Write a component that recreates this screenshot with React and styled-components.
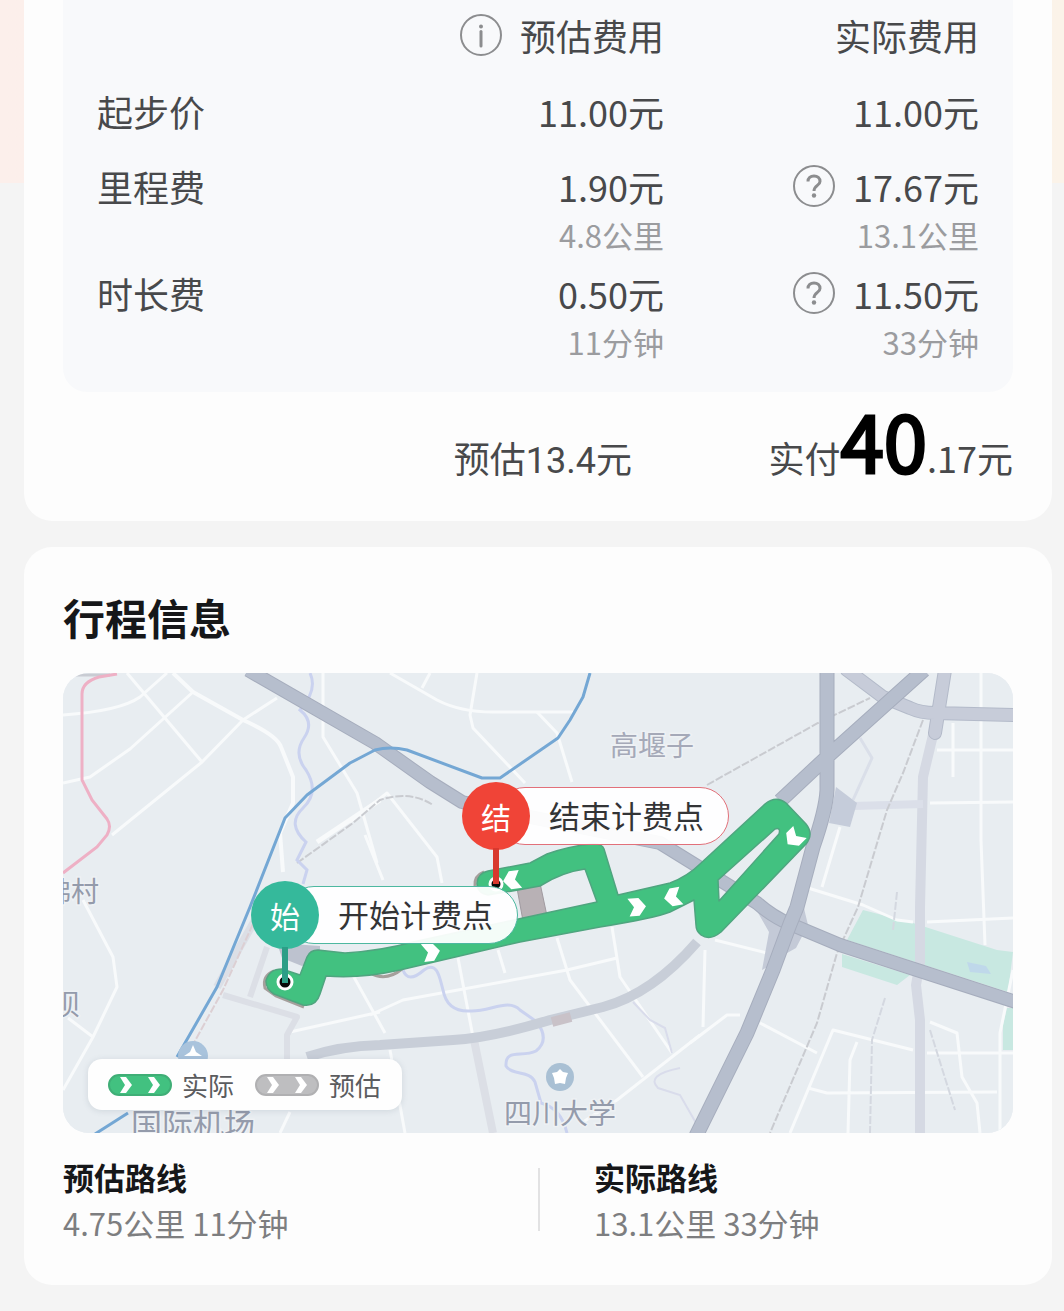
import React from "react";
import styled, { createGlobalStyle } from "styled-components";

const GlobalStyle = createGlobalStyle`
  *, *::before, *::after { box-sizing: border-box; }
  body {
    margin: 0;
    background: #f4f4f4;
    font-family: "Noto Sans CJK SC", "Noto Sans", sans-serif;
    color: #48494b;
  }
`;

const Page = styled.main`
  display: flex;
  flex-direction: column;
  gap: 26px;
  padding: 0 12px 26px 24px;
  background: linear-gradient(90deg, #fcefeb, #fbf3e9) no-repeat 0 0 / 100% 183px, #f4f4f4;
`;

const Card = styled.section`
  background: #fdfdfd;
  border-radius: ${(p) => (p.$continued ? "0 0 28px 28px" : "28px")};
  padding: ${(p) => (p.$continued ? "0 39px 32px" : "40px 39px 39px")};
`;

const FeePanel = styled.div`
  background: #f8f9fb;
  border-radius: 0 0 24px 24px;
  padding: 10px 34px 17px;
`;

const FeeTable = styled.table`
  width: 100%;
  border-collapse: collapse;
  table-layout: fixed;
`;

const Cell = styled.td`
  padding: 0 0 ${(p) => p.$gap}px;
  vertical-align: top;
  text-align: ${(p) => (p.$start ? "left" : "right")};
  font-weight: 400;
  font-size: 36px;
  line-height: 50px;
  white-space: nowrap;
  width: ${(p) => p.$width || "auto"};
`;

const Amount = styled.div`
  display: flex;
  align-items: center;
  justify-content: flex-end;
  gap: 18px;
  height: 50px;
`;

const Detail = styled.div`
  font-size: 31px;
  line-height: 48px;
  color: #9b9c9f;
`;

const HintButton = styled.button`
  display: flex;
  padding: 0;
  border: 0;
  background: none;
  color: #8c8d8f;
  cursor: pointer;

  svg { display: block; width: 42px; height: 42px; }
`;

const Totals = styled.div`
  display: grid;
  grid-template-columns: 569px 1fr;
  align-items: baseline;
  height: 97px;
  font-size: 36px;
  line-height: 94px;
  text-align: right;
  white-space: nowrap;
`;

const Total = styled.div``;

const EstimateNumber = styled.span`
  font-family: Roboto, "Liberation Sans", sans-serif;
`;

const PaidNumber = styled.strong`
  font-size: 78px;
  font-weight: 400;
  color: #000;
  -webkit-text-stroke: 3px #000;
`;

const Title = styled.h2`
  margin: 0 0 26px;
  font-size: 42px;
  line-height: 60px;
  font-weight: 700;
  color: #161719;
`;

const Map = styled.div`
  position: relative;
  aspect-ratio: 950 / 460;
  border-radius: 26px;
  overflow: hidden;
  background: #e8edf1;
`;

const MapCanvas = styled.svg`
  display: block;
  width: 100%;
  height: 100%;
`;

const MapLabel = styled.text`
  font-family: "Noto Sans CJK SC", sans-serif;
  font-size: ${(p) => p.$size || 28}px;
  fill: ${(p) => p.$fill || "#949bab"};
  stroke: #eef1f4;
  stroke-width: 3px;
  paint-order: stroke;
`;

const Pin = styled.div`
  position: absolute;
  left: ${(p) => p.$left}%;
  top: ${(p) => p.$top}%;
  display: flex;
  align-items: center;
  color: #333436;
  font-size: 31px;
  line-height: 40px;
  white-space: nowrap;
`;

const PinHead = styled.span`
  position: relative;
  z-index: 1;
  width: 68px;
  height: 68px;
  border-radius: 50%;
  display: flex;
  align-items: center;
  justify-content: center;
  background: ${(p) => p.$color};
  color: #fff;
  font-size: 30px;

  &::before {
    content: "";
    position: absolute;
    top: 66px;
    left: 31px;
    width: 6px;
    height: 36px;
    background: ${(p) => p.$stemColor};
  }
`;

const PinText = styled.span`
  margin-left: -34px;
  padding: 7px 24px 9px 52px;
  border: 1px solid ${(p) => p.$color};
  border-radius: 29px;
  background: rgba(255, 255, 255, 0.94);
`;

const Legend = styled.div`
  position: absolute;
  left: 25px;
  bottom: 23px;
  display: flex;
  align-items: center;
  gap: 21px;
  height: 51px;
  padding: 0 21px 0 20px;
  border-radius: 14px;
  background: #fefefe;
  box-shadow: 0 1px 6px rgba(70, 85, 110, 0.15);
  font-size: 26px;
  line-height: 36px;
  color: #5b5c5f;
`;

const LegendItem = styled.span`
  display: flex;
  align-items: center;
  gap: 10px;

  svg { display: block; width: 64px; height: 22px; }
`;

const Routes = styled.div`
  display: grid;
  grid-template-columns: 1fr 1fr;
  align-items: center;
  margin-top: 21px;
`;

const Route = styled.div`
  position: relative;
  padding-left: ${(p) => (p.$divided ? "56px" : "0")};

  &::before {
    content: "";
    display: ${(p) => (p.$divided ? "block" : "none")};
    position: absolute;
    left: 0;
    top: 14px;
    bottom: 15px;
    border-left: 2px solid #e2e2e3;
  }
`;

const RouteName = styled.h3`
  margin: 0;
  font-size: 31px;
  line-height: 46px;
  font-weight: 700;
  color: #161719;
`;

const RouteDetail = styled.p`
  margin: 0;
  font-size: 31px;
  line-height: 46px;
  color: #7d7e80;
`;

function InfoIcon() {
  return (
    <svg viewBox="0 0 42 42" fill="none" stroke="currentColor" aria-hidden="true">
      <circle cx="21" cy="21" r="20" strokeWidth="2" />
      <circle cx="21" cy="12.5" r="2" fill="currentColor" stroke="none" />
      <path d="M21 17.5V32" strokeWidth="3" strokeLinecap="round" />
    </svg>
  );
}

function QuestionIcon() {
  return (
    <svg viewBox="0 0 42 42" fill="none" stroke="currentColor" aria-hidden="true">
      <circle cx="21" cy="21" r="20" strokeWidth="2" />
      <path d="M15 16.500C15 13 17.500 11 21 11S27 13 27 16.500C27 20.500 21 20.500 21 26" strokeWidth="3" />
      <circle cx="21" cy="30.500" r="2.200" fill="currentColor" stroke="none" />
    </svg>
  );
}

function Hint({ label, children }) {
  return <HintButton type="button" aria-label={label}>{children}</HintButton>;
}

const legendChevron = "M-6-8H0L6 0 0 8H-6L-1 0Z";
const routeChevron = "M-9-9H2L9 0 2 9H-8L-3 0Z";

function LegendPill({ fill, edge }) {
  return (
    <svg viewBox="0 0 64 22" aria-hidden="true">
      <rect x="1" y="1" width="62" height="20" rx="10" fill={fill} stroke={edge} strokeWidth="2" />
      <path d={legendChevron} transform="translate(18 11)" fill="#fff" />
      <path d={legendChevron} transform="translate(46 11)" fill="#fff" />
    </svg>
  );
}

const streets = [
  "M63 715Q120 711 140 697L167 673",
  "M127 673L202 762",
  "M63 783L90 777 130 749 193 692",
  "M112 835L202 762 243 720 277 698",
  "M323 673V737L357 793 377 863",
  "M390 673L437 700Q460 712 493 712H573",
  "M477 673L470 715 473 728 525 783",
  "M537 712L557 733 572 782",
  "M430 673L422 688",
  "M350 822L387 793 437 857 442 883",
  "M365 835L383 880",
  "M83 900L113 957 117 987 93 1037 63 1090M68 1018L93 1037",
  "M937 750H1013M930 803L1013 802M953 723V777",
  "M981 673V840L985 945",
  "M840 827L822 887M808 888L863 905 897 920 913 922M927 922L1013 918",
  "M715 940L767 953M690 1043L727 1015H740M760 1023L817 1053",
  "M705 950L703 1027",
  "M790 1133L833 1030 913 1050",
  "M848 1133L850 1060 857 1042M808 1088L827 1093 997 1092",
  "M927 1053H1013M930 1022L957 1033 962 1077 977 1103 980 1133",
  "M1000 1133V1033L1013 970",
  "M370 1015L403 1000 567 970 617 958",
  "M350 970L385 1033M390 1050L405 1133",
  "M458 958L473 1037M498 950L505 973",
  "M557 938L570 980 643 1077",
  "M612 927L620 977 672 1053M580 1124L617 1100 700 1035",
  "M290 1032L380 1012M290 1112L280 1133",
];

const actualRoute = [
  "M488 871L530 863 547 854Q566 847 590 844Q602 843 604 849L618 895 670 883Q688 876 700 864L765 804Q776 795 786 803L806 824Q814 834 806 844L721 932Q710 941 701 935 696 931 696 925L694 900 670 912Q655 918 600 927L520 942 400 970Q360 979 326 976L320 994Q316 1007 303 1005L274 994Q266 989 266 981 269 969 282 969L300 975 307 957Q310 950 318 950L345 953Q380 951 413 942L523 918 597 902 585 869Q562 872 540 886L518 890 488 895Q477 893 477 883 478 873 488 871Z",
  "M775 829Q781 827 779 834L719 901 718 880Z",
].join("");

const trunkRoad = "M248 670L375 743 430 782 462 802 520 815 660 843 757 903Q773 917 790 924L840 945 917 970 1016 1002";
const crossRoads = "M924 670L827 757 780 801M827 670V790Q826 810 813 847L797 907 790 924 773 970 747 1033 696 1136";
const ringRoad = "M847 670L883 697 910 708Q921 713 935 713L1016 715M945 670L935 733";

function CityMap() {
  return (
    <MapCanvas viewBox="63 673 950 460" role="img" aria-label="行程路线">
      <rect x="63" y="673" width="950" height="460" fill="#e8edf1" />
      <path d="M863 910L913 923 997 950 1013 952 1008 992 847 940ZM842 954V967L897 985 910 975ZM1007 1008H1013V1050H1003V1025Z" fill="#c8e8e1" />
      <path d="M967 962L986 966 991 974 970 972Z" fill="#bfd8ea" />

      <g fill="none" stroke="#f8fafb" strokeWidth="3" strokeLinejoin="round">
        {streets.map((d) => <path key={d} d={d} />)}
        <path d="M173 673L193 692 243 720Q277 735 281 747L293 777V803L280 833 283 872" strokeWidth="4" />
        <path d="M317 842L380 800" strokeWidth="5" />
      </g>

      <g fill="none" stroke="#dcdfe6" strokeWidth="8" strokeLinejoin="round">
        <path d="M223 995L297 1017 287 1035V1065M250 997L267 947" strokeWidth="6" />
        <path d="M473 1035L493 1133M217 987L258 915" />
        <path d="M933 735L923 777 920 907V962L916 985 920 1020V1133" stroke="#d5d9e3" strokeWidth="10" />
        <path d="M853 806L923 804" stroke="#dbdfe9" />
        <path d="M860 738L872 758 853 800" stroke="#dadfe9" strokeWidth="3" />
      </g>

      <g fill="none" stroke="#c9cbd0" strokeWidth="2" strokeDasharray="8 2">
        <path d="M297 863L353 823 380 800Q410 790 433 805" />
        <path d="M707 785L757 757 818 723 870 698" />
        <path d="M923 720L903 773 887 810 858 907 837 953 817 1023 770 1133" />
        <path d="M897 892L893 930M885 998L872 1040 870 1133M930 1030L955 1110" stroke="#d4d8e0" />
        <path d="M257 915L223 990 190 1050" stroke="#dccfd3" />
      </g>

      <g fill="none" stroke="#cad2ef" strokeWidth="3">
        <path d="M310 673Q318 690 300 710 315 722 304 738T306 770Q320 792 303 808T306 842L297 860 307 870 303 884" />
        <path d="M403 970Q408 984 424 970C438 960 440 980 443 990Q447 1012 470 1011C490 1012 508 998 520 1010L537 1022Q550 1040 536 1051C522 1058 505 1048 506 1066 512 1076 530 1070 535 1082L541 1103Q561 1108 567 1133" />
        <path d="M633 1002L650 1020 665 1028 672 1053M680 1068Q645 1075 658 1088L680 1095 700 1130" stroke="#d9dceb" strokeWidth="2" />
      </g>

      <path d="M836 787L857 803 850 827 829 823Z" fill="#c5ccda" />
      <path d="M277 943L320 946V960L302 966 282 958Z" fill="#bdc2cf" />
      <path d="M753 904L775 909 785 930 771 965 762 970 769 932ZM802 900L808 925 796 948 780 957Z" fill="#c4cad7" />

      <g fill="none" strokeLinejoin="round">
        <path d={ringRoad} stroke="#b3bac9" strokeWidth="14" strokeLinecap="round" />
        <path d={ringRoad} stroke="#c7ccd9" strokeWidth="12" strokeLinecap="round" />
        <path d="M307 1057Q340 1046 380 1045L453 1040Q490 1038 550 1020L603 1007Q652 994 697 942" stroke="#c8ced8" strokeWidth="10" />
        <path d="M552 1022L571 1017" stroke="#c9c2c8" strokeWidth="10" />
        <path d={trunkRoad} stroke="#a6adbd" strokeWidth="14" />
        <path d={trunkRoad} stroke="#b6becd" strokeWidth="12" />
        <path d={crossRoads} stroke="#a6adbd" strokeWidth="15" />
        <path d={crossRoads} stroke="#b6becd" strokeWidth="13" />
      </g>

      <path d="M63 675H110" stroke="#c9ccd3" strokeWidth="3" />
      <path d="M117 674L99 677Q82 682 82 694V780L92 800 107 819Q112 826 107 835L97 847 63 873" fill="none" stroke="#eeb0c5" strokeWidth="3" />
      <path d="M590 673L583 697 570 720 558 738 500 778H482L407 750Q390 746 375 750L350 763 307 795 285 818 250 907 217 987 177 1057M128 1113L95 1134" fill="none" stroke="#74a7d4" strokeWidth="3" strokeLinejoin="round" />

      <circle cx="193" cy="1056" r="15" fill="#a9c3dc" />
      <path d="M193 1045L196 1052 202 1056H184L190 1052Z" fill="#fff" />
      <circle cx="560" cy="1077" r="14" fill="#a9c0d4" />
      <path d="M560 1069L563 1072 568 1073 566 1078 565 1084 560 1083 555 1084 554 1078 552 1073 557 1072Z" fill="#fff" />

      <MapLabel x="610" y="756" $fill="#a5a9b8">高堰子</MapLabel>
      <MapLabel x="43" y="902">佛村</MapLabel>
      <MapLabel x="52" y="1015">坝</MapLabel>
      <MapLabel x="504" y="1124">四川大学</MapLabel>
      <MapLabel x="131" y="1136" $size={31}>国际机场</MapLabel>

      <path d="M274 971Q262 976 265 988L276 996 304 1007M370 973Q386 982 402 969M484 872Q474 876 475 886" fill="none" stroke="#a59f9c" strokeWidth="3" />
      <path d="M517 888L540 883 547 916 523 921Z" fill="#b8b1b5" stroke="#a09aa0" />
      <path d={actualRoute} fill="#42c180" fillRule="evenodd" stroke="#4fa57f" strokeWidth="1.500" strokeLinejoin="round" />

      <g fill="#fff">
        <path d={routeChevron} transform="translate(431 952) rotate(-8)" />
        <path d={routeChevron} transform="translate(637 907) rotate(-4)" />
        <path d={routeChevron} transform="translate(673 897) rotate(170)" />
        <path d={routeChevron} transform="translate(794 838) rotate(135)" />
        <path d={routeChevron} transform="translate(512 880) rotate(172)" />
      </g>
      <g fill="#080a09" stroke="#fff" strokeWidth="3">
        <circle cx="285" cy="982" r="7" />
        <circle cx="496" cy="884" r="6" />
      </g>
    </MapCanvas>
  );
}

export default function App() {
  return (
    <>
      <GlobalStyle />
      <Page>
        <Card $continued>
          <FeePanel>
            <FeeTable>
              <thead>
                <tr>
                  <Cell $gap={26} $start />
                  <Cell as="th" scope="col" $gap={26} $width="350px">
                    <Amount><Hint label="预估费用说明"><InfoIcon /></Hint>预估费用</Amount>
                  </Cell>
                  <Cell as="th" scope="col" $gap={26} $width="315px">
                    <Amount>实际费用</Amount>
                  </Cell>
                </tr>
              </thead>
              <tbody>
                <tr>
                  <Cell as="th" scope="row" $gap={25} $start>起步价</Cell>
                  <Cell $gap={25}><Amount>11.00元</Amount></Cell>
                  <Cell $gap={25}><Amount>11.00元</Amount></Cell>
                </tr>
                <tr>
                  <Cell as="th" scope="row" $gap={9} $start>里程费</Cell>
                  <Cell $gap={9}>
                    <Amount>1.90元</Amount>
                    <Detail>4.8公里</Detail>
                  </Cell>
                  <Cell $gap={9}>
                    <Amount><Hint label="里程费说明"><QuestionIcon /></Hint>17.67元</Amount>
                    <Detail>13.1公里</Detail>
                  </Cell>
                </tr>
                <tr>
                  <Cell as="th" scope="row" $gap={9} $start>时长费</Cell>
                  <Cell $gap={9}>
                    <Amount>0.50元</Amount>
                    <Detail>11分钟</Detail>
                  </Cell>
                  <Cell $gap={9}>
                    <Amount><Hint label="时长费说明"><QuestionIcon /></Hint>11.50元</Amount>
                    <Detail>33分钟</Detail>
                  </Cell>
                </tr>
              </tbody>
            </FeeTable>
          </FeePanel>
          <Totals>
            <Total>预估<EstimateNumber>13.4</EstimateNumber>元</Total>
            <Total>实付<PaidNumber>40</PaidNumber>.17元</Total>
          </Totals>
        </Card>

        <Card>
          <Title>行程信息</Title>
          <Map>
            <CityMap />
            <Pin $left={42} $top={23.700}>
              <PinHead $color="#f04437" $stemColor="#d8392e">结</PinHead>
              <PinText $color="#e2707a">结束计费点</PinText>
            </Pin>
            <Pin $left={19.800} $top={45.200}>
              <PinHead $color="#35b99b" $stemColor="#2c9e87">始</PinHead>
              <PinText $color="#4db8a0">开始计费点</PinText>
            </Pin>
            <Legend>
              <LegendItem><LegendPill fill="#42c180" edge="#3fae76" />实际</LegendItem>
              <LegendItem><LegendPill fill="#bebec0" edge="#b0b0b2" />预估</LegendItem>
            </Legend>
          </Map>
          <Routes>
            <Route>
              <RouteName>预估路线</RouteName>
              <RouteDetail>4.75公里 11分钟</RouteDetail>
            </Route>
            <Route $divided>
              <RouteName>实际路线</RouteName>
              <RouteDetail>13.1公里 33分钟</RouteDetail>
            </Route>
          </Routes>
        </Card>
      </Page>
    </>
  );
}
